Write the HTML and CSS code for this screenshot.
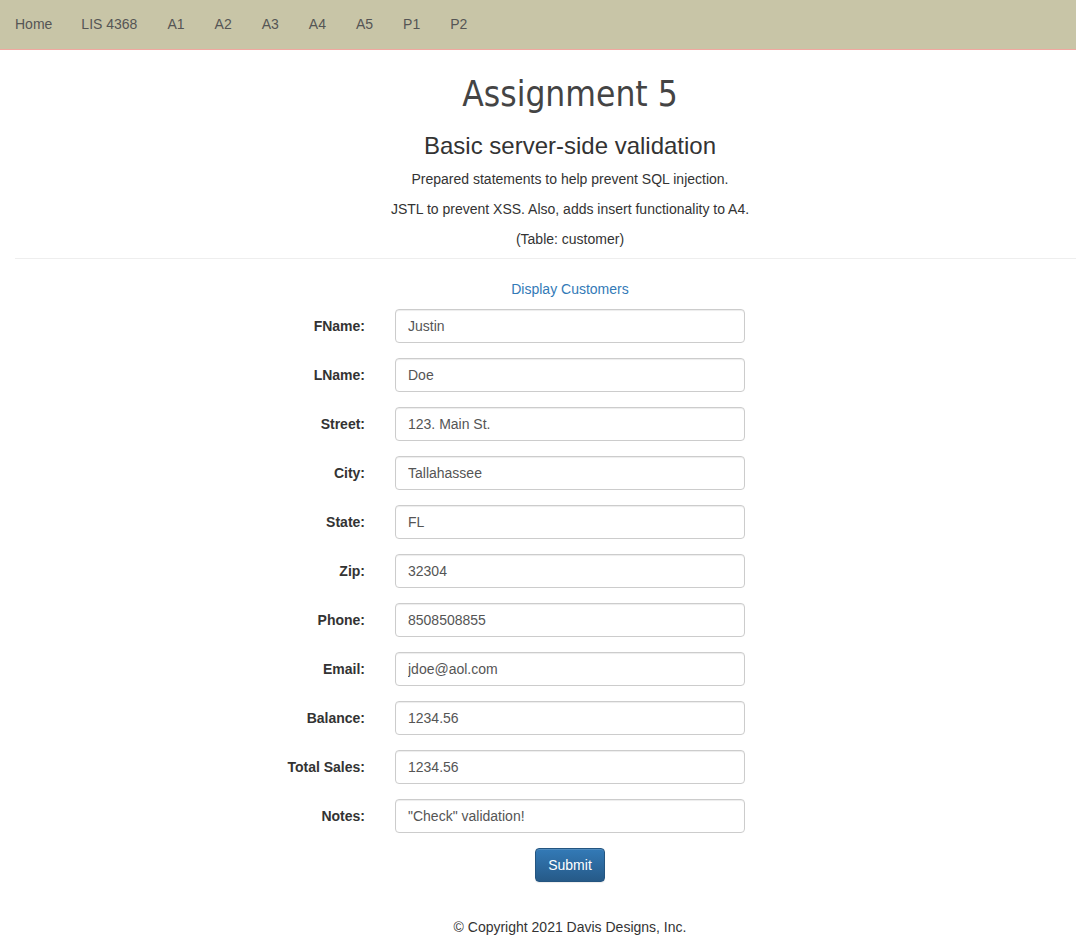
FILE: index.html
```html
<!DOCTYPE html>
<html>
<head>
<meta charset="utf-8">
<link rel="stylesheet" href="styles.css">
</head>
<body>
<nav class="navbar">
  <ul class="nav">
    <li><a href="#">Home</a></li>
    <li><a href="#">LIS 4368</a></li>
    <li><a href="#">A1</a></li>
    <li><a href="#">A2</a></li>
    <li><a href="#">A3</a></li>
    <li><a href="#">A4</a></li>
    <li><a href="#">A5</a></li>
    <li><a href="#">P1</a></li>
    <li><a href="#">P2</a></li>
  </ul>
</nav>
<div class="container">
  <div class="page-header">
    <h1 class="title">Assignment 5</h1>
    <h3 class="subtitle">Basic server-side validation</h3>
    <p>Prepared statements to help prevent SQL injection.</p>
    <p>JSTL to prevent XSS. Also, adds insert functionality to A4.</p>
    <p class="last">(Table: customer)</p>
  </div>
  <p class="link-row"><a href="#">Display Customers</a></p>
  <form class="form">
    <div class="form-group"><label>FName:</label><input class="form-control" value="Justin"></div>
    <div class="form-group"><label>LName:</label><input class="form-control" value="Doe"></div>
    <div class="form-group"><label>Street:</label><input class="form-control" value="123. Main St."></div>
    <div class="form-group"><label>City:</label><input class="form-control" value="Tallahassee"></div>
    <div class="form-group"><label>State:</label><input class="form-control" value="FL"></div>
    <div class="form-group"><label>Zip:</label><input class="form-control" value="32304"></div>
    <div class="form-group"><label>Phone:</label><input class="form-control" value="8508508855"></div>
    <div class="form-group"><label>Email:</label><input class="form-control" value="jdoe@aol.com"></div>
    <div class="form-group"><label>Balance:</label><input class="form-control" value="1234.56"></div>
    <div class="form-group"><label>Total Sales:</label><input class="form-control" value="1234.56"></div>
    <div class="form-group"><label>Notes:</label><input class="form-control" value="&quot;Check&quot; validation!"></div>
    <div class="submit-row"><button type="button" class="btn-primary">Submit</button></div>
  </form>
  <footer class="footer">© Copyright 2021 Davis Designs, Inc.</footer>
</div>
</body>
</html>
```

FILE: styles.css
```css
html, body {
  margin: 0;
  padding: 0;
  overflow: hidden;
}
body {
  font-family: "Liberation Sans", Arial, sans-serif;
  font-size: 14px;
  line-height: 20px;
  color: #333;
  background: #fff;
}
.navbar {
  height: 49px;
  background: #c8c5a7;
  border-bottom: 1px solid #f0a8a0;
}
.nav {
  list-style: none;
  margin: 0;
  padding: 0;
  display: flex;
}
.nav a {
  display: block;
  padding: 14px 15px 15px;
  color: #555;
  text-decoration: none;
}
.nav li:first-child a {
  padding-right: 14px;
}
.container {
  width: 1110px;
  padding: 0 15px;
}
.page-header {
  text-align: center;
  border-bottom: 1px solid #eee;
  padding-bottom: 9px;
  margin-bottom: 20px;
}
.title {
  margin: 0;
  padding-top: 20px;
  font-family: "DejaVu Sans Condensed", "DejaVu Sans", sans-serif;
  font-stretch: condensed;
  font-weight: normal;
  font-size: 35px;
  line-height: 48px;
  color: #444;
}
.subtitle {
  margin: 15px 0 10px;
  font-size: 24px;
  font-weight: normal;
  line-height: 26px;
}
.page-header p {
  margin: 0 0 10px;
}
.page-header p.last {
  margin-bottom: 0;
}
.link-row {
  text-align: center;
  margin: 0 0 10px;
}
.link-row a {
  color: #337ab7;
  text-decoration: none;
}
.form {
  display: flex;
  flex-direction: column;
}
.form-group {
  display: flex;
  align-items: flex-start;
  margin-bottom: 15px;
}
.form-group label {
  width: 350px;
  padding: 7px 0 0 0;
  text-align: right;
  font-weight: bold;
  box-sizing: border-box;
}
.form-control {
  margin-left: 30px;
  width: 350px;
  height: 34px;
  box-sizing: border-box;
  padding: 6px 12px;
  font: 14px/20px "Liberation Sans", Arial, sans-serif;
  color: #555;
  border: 1px solid #ccc;
  border-radius: 4px;
  box-shadow: inset 0 1px 1px rgba(0,0,0,.075);
  background: #fff;
}
.submit-row {
  display: flex;
  justify-content: center;
}
.btn-primary {
  height: 34px;
  padding: 6px 12px;
  font: 14px/20px "Liberation Sans", Arial, sans-serif;
  color: #fff;
  border: 1px solid #245580;
  border-radius: 4px;
  background: linear-gradient(to bottom, #337ab7 0, #265a88 100%);
  box-shadow: inset 0 1px 0 rgba(255,255,255,.15), 0 1px 1px rgba(0,0,0,.075);
}
.footer {
  text-align: center;
  margin-top: 35px;
  padding-bottom: 20px;
}
```
